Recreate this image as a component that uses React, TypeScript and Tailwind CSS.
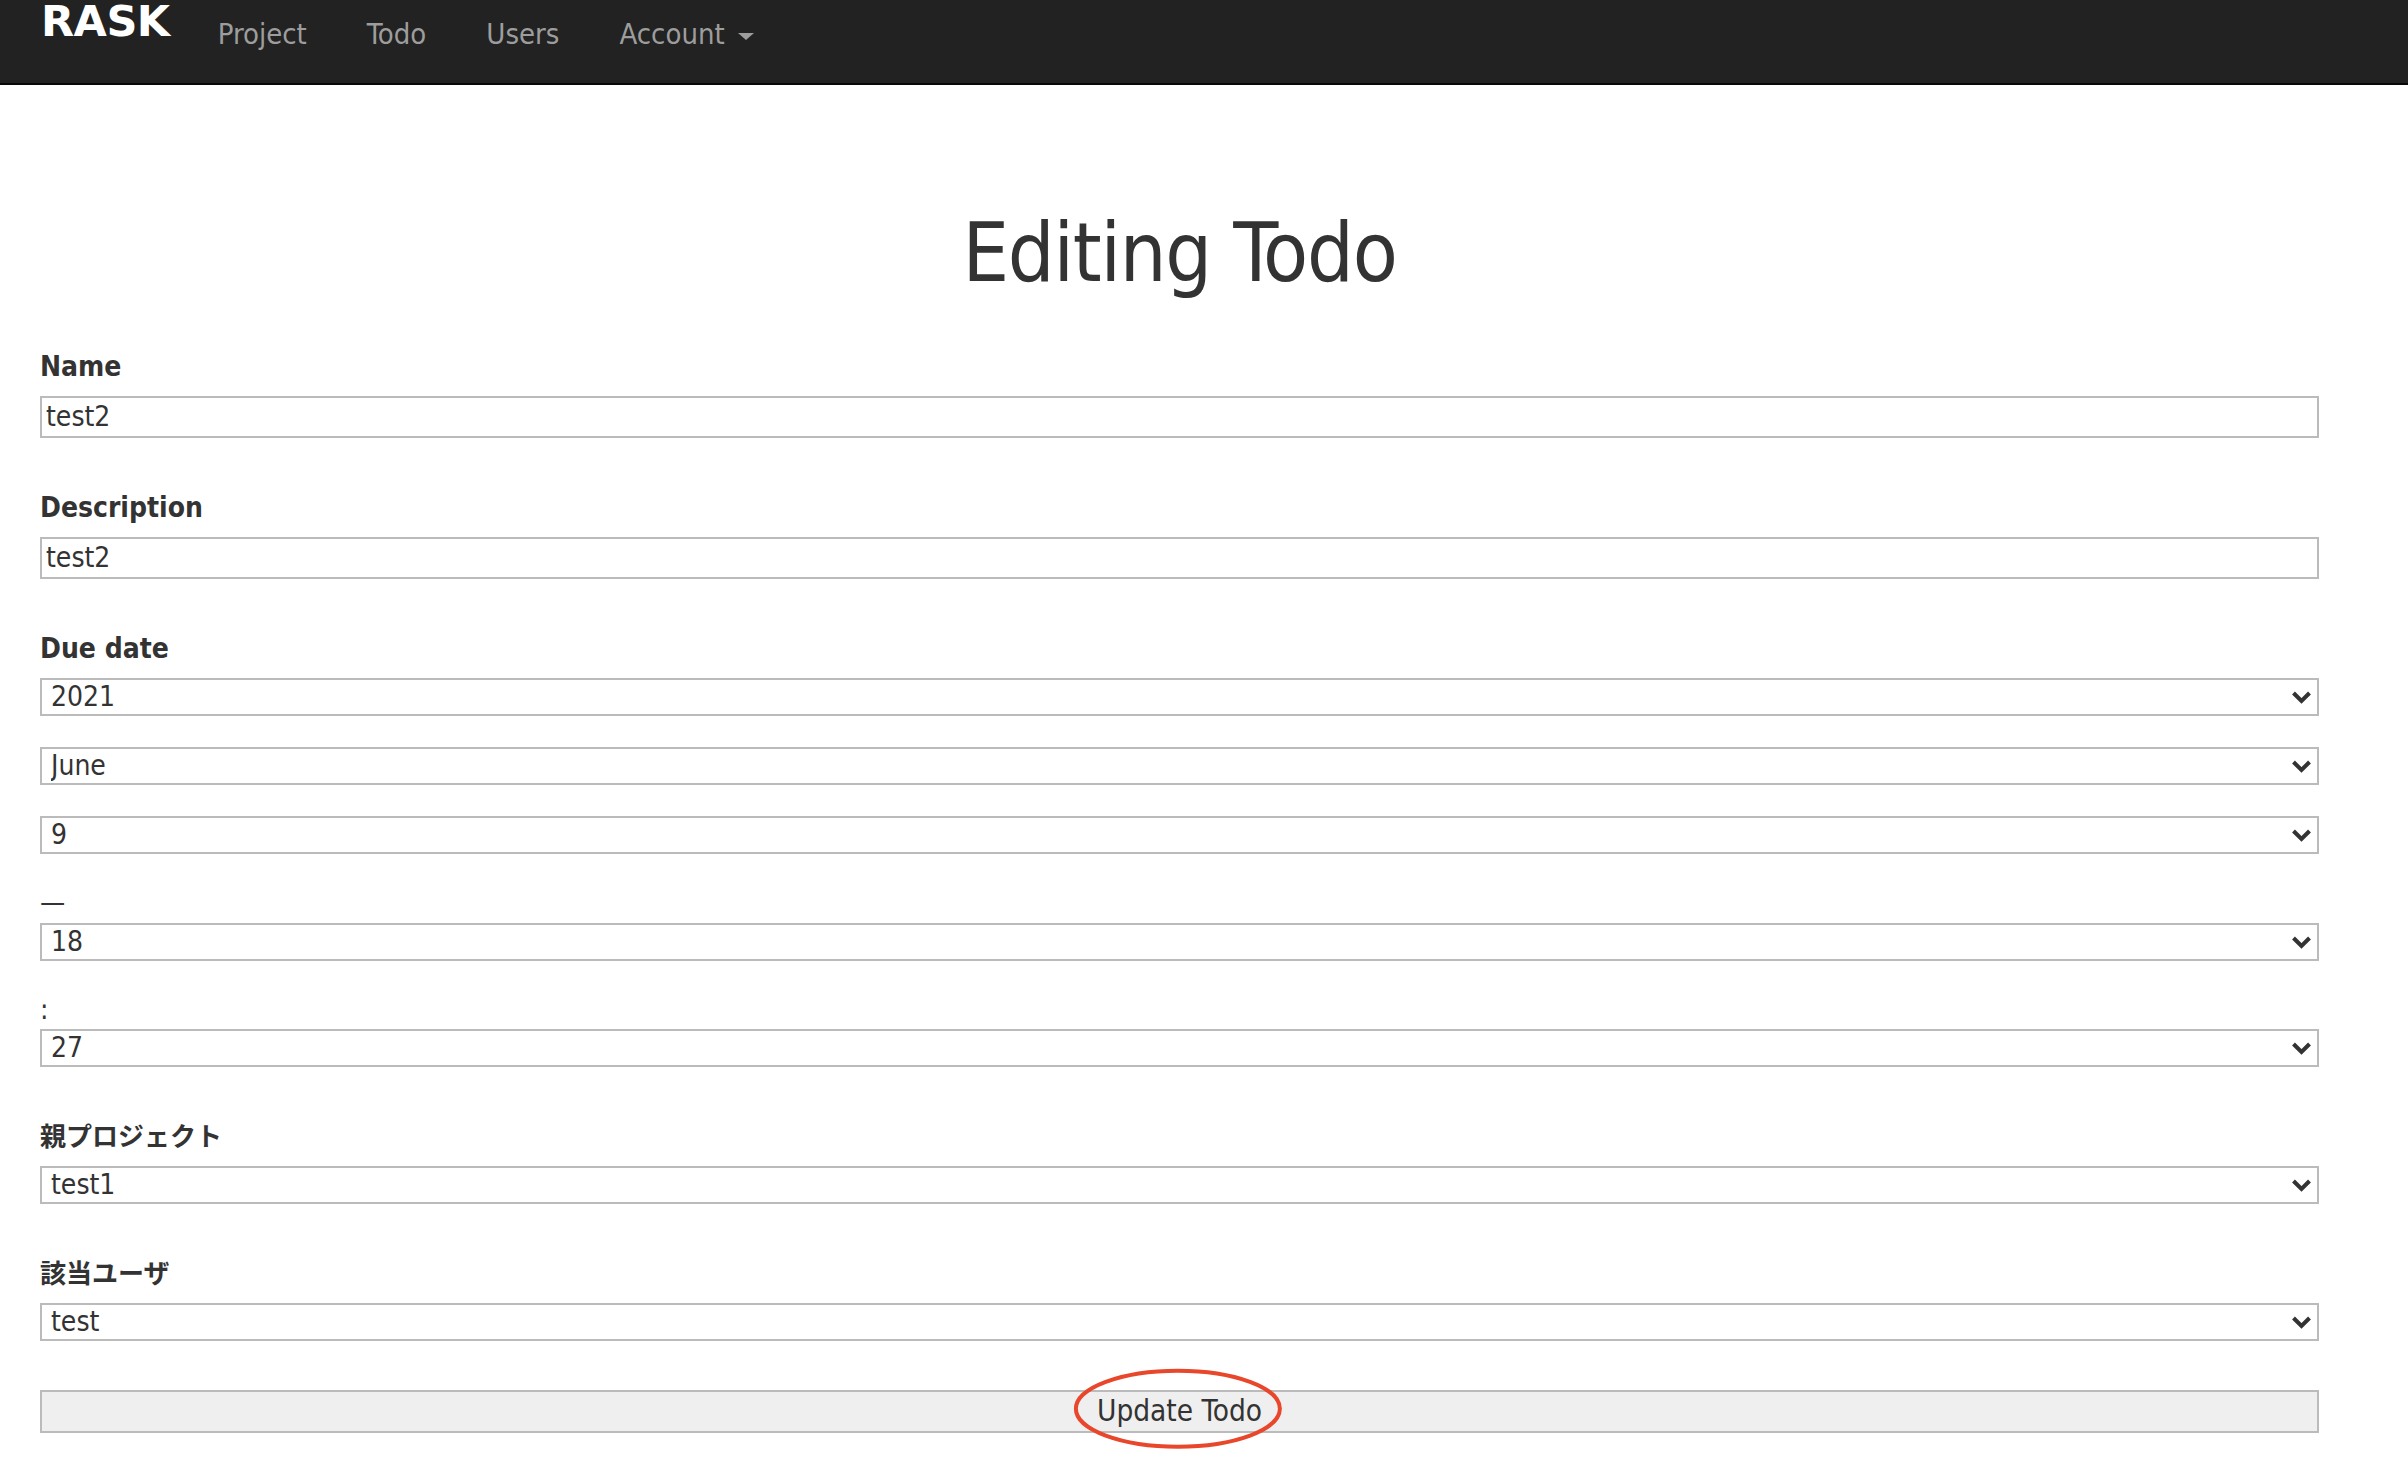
import React from "react";

const body =
  "font-['DejaVu_Sans_Condensed','DejaVu_Sans','Noto_Sans_CJK_JP',sans-serif] font-stretch-condensed";

const Chevron = () => (
  <svg
    className="pointer-events-none absolute right-[7px] top-1/2 -translate-y-1/2"
    width="21"
    height="14"
    viewBox="0 0 21 14"
  >
    <polyline
      points="2.5,3 10.5,11 18.5,3"
      fill="none"
      stroke="#333"
      strokeWidth="4"
    />
  </svg>
);

const Select: React.FC<{ value: string; className?: string }> = ({
  value,
  className = "mb-[31px]",
}) => (
  <div className={`relative ${className}`}>
    <select
      defaultValue={value}
      className="block w-full h-[38px] appearance-none bg-white border-2 border-[#bbb] pl-[9px] text-[28px] leading-[34px] text-[#333]"
    >
      <option value={value}>{value}</option>
    </select>
    <Chevron />
  </div>
);

const Label: React.FC<{ children: React.ReactNode; jp?: boolean }> = ({
  children,
  jp,
}) => (
  <label
    className={`block font-bold leading-[36px] mb-[11px] ${
      jp ? "text-[26px]" : "text-[28px]"
    }`}
  >
    {children}
  </label>
);

const TextField: React.FC<{ label: string; value: string }> = ({
  label,
  value,
}) => (
  <div className="mb-[52px]">
    <Label>{label}</Label>
    <input
      defaultValue={value}
      className="block w-full h-[42px] border-2 border-[#bbb] px-[4px] text-[28px] text-[#333] bg-white"
    />
  </div>
);

export default function App() {
  const links = ["Project", "Todo", "Users"];

  return (
    <div className={`min-h-screen bg-white text-[#333] ${body}`}>
      <nav className="h-[85px] bg-[#222] border-b-2 border-[#080808] flex items-start pl-[41px]">
        <a className="font-['DejaVu_Sans',sans-serif] font-stretch-normal font-bold text-white text-[43px] leading-[42px] tracking-[-0.5px]">
          RASK
        </a>
        <ul className="flex ml-[18px]">
          {links.map((l) => (
            <li key={l}>
              <a className="block px-[30px] pt-[16px] text-[29px] leading-[36px] text-[#9d9d9d]">
                {l}
              </a>
            </li>
          ))}
          <li>
            <a className="block px-[30px] pt-[16px] text-[29px] leading-[36px] text-[#9d9d9d]">
              Account
              <span className="inline-block align-middle ml-[13px] w-0 h-0 border-x-[8px] border-t-[7px] border-x-transparent border-t-[#9d9d9d]" />
            </a>
          </li>
        </ul>
      </nav>

      <main className="ml-[40px] w-[2279px]">
        <h1 className="mt-[122px] mb-[50px] text-center text-[82px] leading-[92px] tracking-[-1.2px] font-normal">
          Editing Todo
        </h1>

        <form onSubmit={(e) => e.preventDefault()}>
          <TextField label="Name" value="test2" />
          <TextField label="Description" value="test2" />

          <div className="mb-[52px]">
            <Label>Due date</Label>
            <Select value="2021" />
            <Select value="June" />
            <Select value="9" />
            <div className="text-[28px] leading-[36px] mb-[2px]">—</div>
            <Select value="18" />
            <div className="text-[28px] leading-[36px] mb-[1px]">:</div>
            <Select value="27" className="" />
          </div>

          <div className="mb-[52px]">
            <Label jp>親プロジェクト</Label>
            <Select value="test1" className="" />
          </div>

          <div className="mb-[49px]">
            <Label jp>該当ユーザ</Label>
            <Select value="test" className="" />
          </div>

          <button
            type="submit"
            className="relative block w-full h-[43px] bg-[#efefef] border-2 border-[#bbb] text-[29.5px] leading-[39px] text-[#333]"
          >
            Update Todo
            <svg
              className="pointer-events-none absolute left-1/2 top-1/2 -translate-x-[51%] -translate-y-[54%]"
              width="212"
              height="84"
              viewBox="0 0 212 84"
            >
              <ellipse
                cx="106"
                cy="42"
                rx="102"
                ry="38"
                fill="none"
                stroke="#e8472b"
                strokeWidth="4"
              />
            </svg>
          </button>
        </form>
      </main>
    </div>
  );
}
